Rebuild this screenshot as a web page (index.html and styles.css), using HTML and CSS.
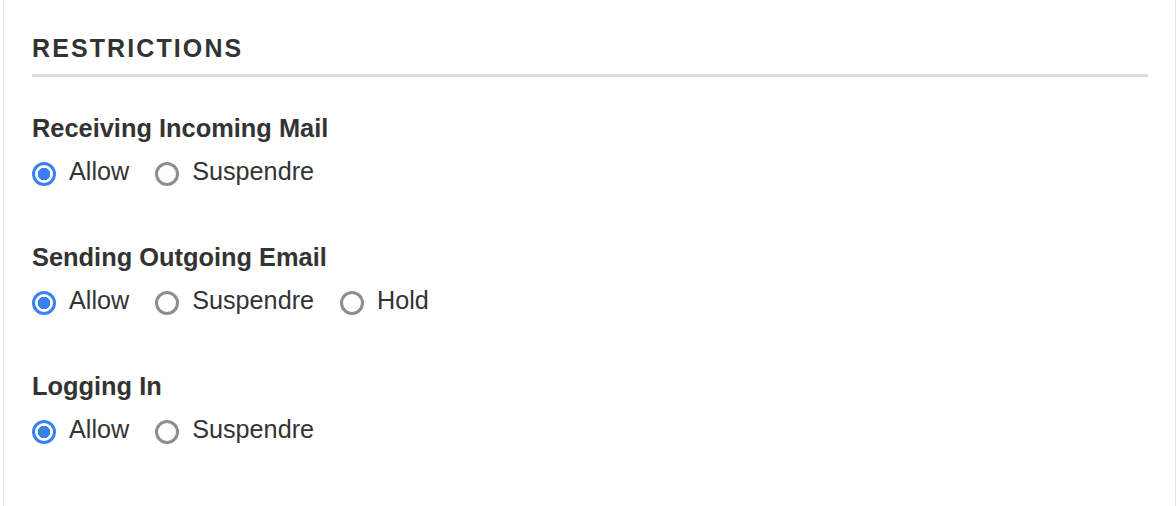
FILE: index.html
```html
<!DOCTYPE html>
<html lang="en">
<head>
    <meta charset="UTF-8">
    <meta name="viewport" content="width=device-width, initial-scale=1.0">
    <title>Restrictions</title>
    <link rel="stylesheet" href="styles.css">
</head>
<body>
    <div class="panel">
        <h2 class="panel-title">RESTRICTIONS</h2>

        <!-- Incoming mail -->
        <div class="group">
            <div class="group-label">Receiving Incoming Mail</div>
            <div class="options">
                <label class="option"><input type="radio" name="incoming" checked> Allow</label>
                <label class="option"><input type="radio" name="incoming"> Suspendre</label>
            </div>
        </div>

        <!-- Outgoing mail -->
        <div class="group">
            <div class="group-label">Sending Outgoing Email</div>
            <div class="options">
                <label class="option"><input type="radio" name="outgoing" checked> Allow</label>
                <label class="option"><input type="radio" name="outgoing"> Suspendre</label>
                <label class="option"><input type="radio" name="outgoing"> Hold</label>
            </div>
        </div>

        <!-- Login -->
        <div class="group">
            <div class="group-label">Logging In</div>
            <div class="options">
                <label class="option"><input type="radio" name="login" checked> Allow</label>
                <label class="option"><input type="radio" name="login"> Suspendre</label>
            </div>
        </div>
    </div>
</body>
</html>
```

FILE: styles.css
```css
body {
    font-family: 'Liberation Sans', Arial, sans-serif;
    background-color: #fff;
    color: #333;
    margin: 0;
    padding: 0;
}

.panel {
    margin-left: 3px;
    min-height: 506px;
    box-sizing: border-box;
    border-left: 1px solid #e2e2e2;
    border-right: 1px solid #e2e2e2;
    padding: 34px 27px 0 28px;
}

.panel-title {
    margin: 0 0 36px 0;
    font-size: 25px;
    font-weight: bold;
    letter-spacing: 2.1px;
    line-height: 28px;
    padding-bottom: 12px;
    border-bottom: 3px solid #dcdcdc;
}

.group {
    margin-bottom: 56px;
}

.group-label {
    font-size: 25.4px;
    font-weight: bold;
    line-height: 30px;
    margin-bottom: 12px;
}

.options {
    display: flex;
    gap: 26px;
}

.option {
    display: flex;
    align-items: center;
    gap: 13px;
    font-size: 25.2px;
    line-height: 30px;
}

.option input {
    appearance: none;
    -webkit-appearance: none;
    width: 24px;
    height: 24px;
    margin: 7px 0 0 0;
    border: 3px solid #8e8d94;
    border-radius: 50%;
    box-sizing: border-box;
    background: #fff;
}

.option input:checked {
    border-color: #3a80f5;
    background: radial-gradient(circle, #3a80f5 0 6px, #fff 6.5px);
}
```
